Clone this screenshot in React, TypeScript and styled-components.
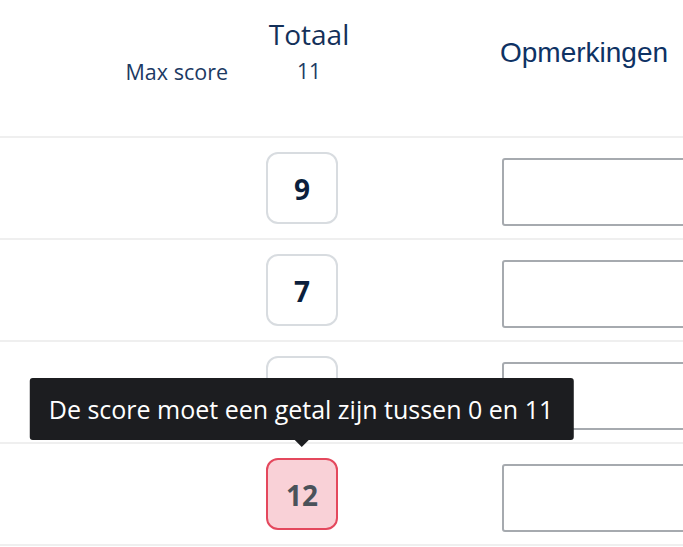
import styled, { createGlobalStyle } from 'styled-components';

const GlobalStyle = createGlobalStyle`
  html, body {
    margin: 0;
    padding: 0;
    background: #ffffff;
  }

  body {
    font-family: 'Open Sans', 'Liberation Sans', sans-serif;
    overflow: hidden;
  }
`;

const Table = styled.div`
  width: 683px;
  overflow: hidden;
`;

const Row = styled.div<{ $header?: boolean }>`
  display: grid;
  grid-template-columns: 232px 140px 1fr;
  height: ${(props) => (props.$header ? '136px' : '100px')};
  border-bottom: 2px solid #efefef;
`;

const LabelCell = styled.div`
  display: flex;
  justify-content: flex-end;
  padding: 57px 4px 0 0;
  color: #1c3a63;
  font-size: 21.5px;
  line-height: 29px;
`;

const TotalHead = styled.div`
  display: flex;
  flex-direction: column;
  align-items: center;
  padding: 15px 0 0 14px;
  color: #143059;
`;

const TotalTitle = styled.div`
  font-size: 28px;
  line-height: 38px;
`;

const MaxValue = styled.div`
  margin-top: 4px;
  font-size: 21px;
  line-height: 29px;
  color: #1c3a63;
`;

const RemarksHead = styled.div`
  padding: 37px 0 0 128px;
  font-family: 'Liberation Sans', Arial, sans-serif;
  font-size: 28px;
  line-height: 32px;
  color: #0e3264;
  white-space: nowrap;
`;

const ScoreCell = styled.div`
  display: flex;
  align-items: center;
  justify-content: center;
`;

const ScoreWrap = styled.div`
  position: relative;
`;

const ScoreBox = styled.div<{ $invalid?: boolean }>`
  box-sizing: border-box;
  width: 72px;
  height: 72px;
  display: flex;
  align-items: center;
  justify-content: center;
  padding-top: 2px;
  border-radius: 12px;
  border: 2px solid ${(props) => (props.$invalid ? '#e4485d' : '#d8dce0')};
  background: ${(props) => (props.$invalid ? '#f9d1d7' : '#ffffff')};
  color: ${(props) => (props.$invalid ? '#4a525a' : '#0b1f3d')};
  font-size: 28px;
  font-weight: 700;
`;

const Tooltip = styled.div`
  position: absolute;
  left: 50%;
  bottom: calc(100% + 18px);
  transform: translateX(-50%);
  height: 62px;
  display: flex;
  align-items: center;
  padding: 0 21px 0 19px;
  background: #1c1d20;
  color: #ffffff;
  border-radius: 3px;
  font-size: 25px;
  white-space: nowrap;
  z-index: 2;

  &::after {
    content: '';
    position: absolute;
    left: 50%;
    top: 100%;
    transform: translateX(-50%);
    border-left: 7px solid transparent;
    border-right: 7px solid transparent;
    border-top: 7px solid #1c1d20;
  }
`;

const RemarksCell = styled.div`
  display: flex;
  align-items: center;
  padding: 8px 0 0 130px;
`;

const RemarksInput = styled.textarea`
  box-sizing: border-box;
  width: 320px;
  height: 68px;
  border: 2px solid #a6aaaf;
  border-radius: 3px;
  resize: none;
  background: #ffffff;
  font-family: 'Open Sans', sans-serif;
  font-size: 18px;
  outline: none;
`;

const scores = [
  { value: '9' },
  { value: '7' },
  { value: '' },
  { value: '12', invalid: true, error: 'De score moet een getal zijn tussen 0 en 11' },
];

export default function App() {
  return (
    <Table>
      <GlobalStyle />
      <Row $header>
        <LabelCell>Max score</LabelCell>
        <TotalHead>
          <TotalTitle>Totaal</TotalTitle>
          <MaxValue>11</MaxValue>
        </TotalHead>
        <RemarksHead>Opmerkingen</RemarksHead>
      </Row>
      {scores.map((score, i) => (
        <Row key={i}>
          <div />
          <ScoreCell>
            <ScoreWrap>
              <ScoreBox $invalid={score.invalid}>{score.value}</ScoreBox>
              {score.error && <Tooltip>{score.error}</Tooltip>}
            </ScoreWrap>
          </ScoreCell>
          <RemarksCell>
            <RemarksInput />
          </RemarksCell>
        </Row>
      ))}
    </Table>
  );
}
